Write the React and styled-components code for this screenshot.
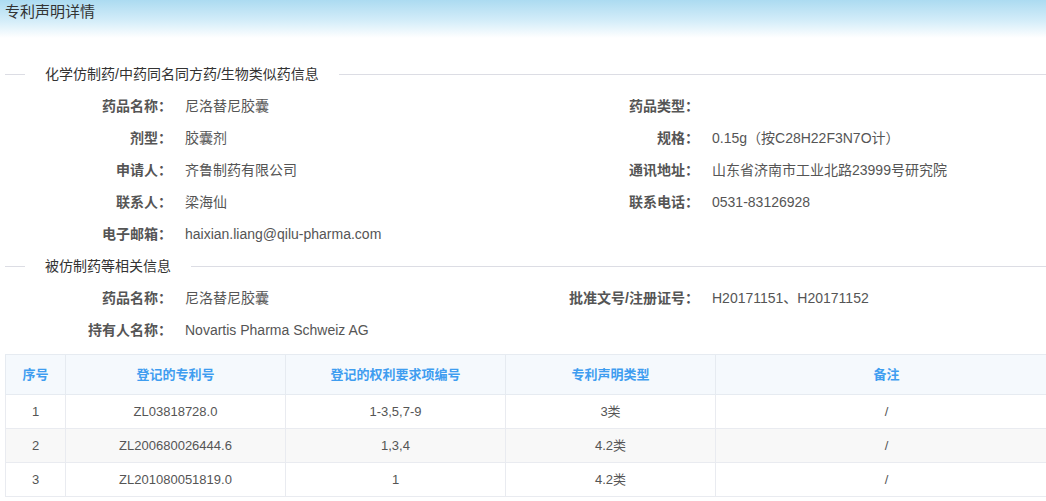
import styled, { createGlobalStyle } from 'styled-components'

const GlobalStyle = createGlobalStyle`
    html, body {
        margin: 0;
        padding: 0;
        background: #fff;
        overflow: hidden;
    }
    body {
        font-family: "Liberation Sans", "Noto Sans CJK SC", sans-serif;
        font-size: 14px;
        color: #555;
    }
`

const drugInfo = [
    ['药品名称：', '尼洛替尼胶囊', '药品类型：', ''],
    ['剂型：', '胶囊剂', '规格：', '0.15g（按C28H22F3N7O计）'],
    ['申请人：', '齐鲁制药有限公司', '通讯地址：', '山东省济南市工业北路23999号研究院'],
    ['联系人：', '梁海仙', '联系电话：', '0531-83126928'],
    ['电子邮箱：', 'haixian.liang@qilu-pharma.com'],
]

const refInfo = [
    ['药品名称：', '尼洛替尼胶囊', '批准文号/注册证号：', 'H20171151、H20171152'],
    ['持有人名称：', 'Novartis Pharma Schweiz AG'],
]

const patents = [
    ['1', 'ZL03818728.0', '1-3,5,7-9', '3类', '/'],
    ['2', 'ZL200680026444.6', '1,3,4', '4.2类', '/'],
    ['3', 'ZL201080051819.0', '1', '4.2类', '/'],
]

const columns = [
    { title: '序号', width: 60 },
    { title: '登记的专利号', width: 220 },
    { title: '登记的权利要求项编号', width: 220 },
    { title: '专利声明类型', width: 210 },
    { title: '备注', width: 342 },
]

function Section({ title, rows }) {
    return (
        <>
            <Legend>
                <LegendLine $short />
                <LegendText>{title}</LegendText>
                <LegendLine />
            </Legend>
            <InfoGrid>
                {rows.map((row, i) => (
                    row.map((cell, j) => (
                        j % 2 === 0
                            ? <Label key={`${i}-${j}`}>{cell}</Label>
                            : <Value key={`${i}-${j}`}>{cell}</Value>
                    ))
                ))}
            </InfoGrid>
        </>
    )
}

export default function App() {
    return (
        <Page>
            <GlobalStyle />
            <Header>专利声明详情</Header>
            <Body>
                <Section title="化学仿制药/中药同名同方药/生物类似药信息" rows={drugInfo} />
                <Section title="被仿制药等相关信息" rows={refInfo} />
                <Table>
                    <colgroup>
                        {columns.map(c => <col key={c.title} style={{ width: c.width }} />)}
                    </colgroup>
                    <thead>
                        <tr>
                            {columns.map(c => <Th key={c.title}>{c.title}</Th>)}
                        </tr>
                    </thead>
                    <tbody>
                        {patents.map((p, i) => (
                            <Tr key={p[0]} $striped={i % 2 === 1}>
                                {p.map((cell, j) => <Td key={j}>{cell}</Td>)}
                            </Tr>
                        ))}
                    </tbody>
                </Table>
            </Body>
        </Page>
    )
}

const Page = styled.div`
    width: 1046px;
    min-height: 501px;
    overflow: hidden;
`
const Header = styled.div`
    height: 38px;
    padding: 2px 0 0 5px;
    box-sizing: border-box;
    background: linear-gradient(to bottom, #acdbf1 0%, #d4edf9 55%, #ffffff 100%);
    color: #333;
    font-size: 15px;
    line-height: 20px;
`
const Body = styled.div`
    padding: 20px 0 0 5px;
`
const Legend = styled.div`
    height: 32px;
    display: flex;
    align-items: center;
`
const LegendLine = styled.div`
    height: 1px;
    background: #dcdde4;
    flex: ${p => (p.$short ? '0 0 20px' : '1')};
`
const LegendText = styled.div`
    padding: 0 20px;
    color: #333;
    font-size: 14px;
    line-height: 20px;
`
const InfoGrid = styled.div`
    display: grid;
    grid-template-columns: 167px 360px 167px 1fr;
    grid-auto-rows: 32px;
    align-items: center;
    line-height: 20px;
`
const Label = styled.div`
    text-align: right;
    font-weight: bold;
    color: #555;
    white-space: nowrap;
`
const Value = styled.div`
    padding-left: 13px;
    color: #555;
    white-space: nowrap;
`
const Table = styled.table`
    margin-top: 8px;
    width: 1052px;
    border-collapse: collapse;
    table-layout: fixed;
    font-size: 13px;
    line-height: 18px;
`
const Th = styled.th`
    height: 39px;
    padding: 0;
    background: #f5f9fd;
    border: 1px solid #e6ebf1;
    color: #3f9df0;
    font-weight: bold;
    text-align: center;
`
const Tr = styled.tr`
    background: ${p => (p.$striped ? '#f8f8f8' : '#fff')};
`
const Td = styled.td`
    height: 33px;
    border: 1px solid #e9ebf0;
    text-align: center;
    color: #555;
    padding: 0;
`
